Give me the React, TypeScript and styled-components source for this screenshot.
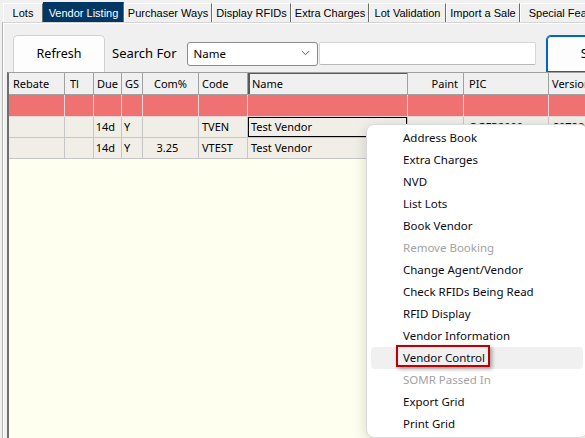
import React from "react";
import styled, { createGlobalStyle, css } from "styled-components";

const GlobalStyle = createGlobalStyle`
  html, body { margin: 0; padding: 0; background: #f0f0f0; }
  body { font-family: "Noto Sans", "Liberation Sans", sans-serif; }
`;

const Page = styled.div`
  position: relative;
  width: 585px;
  height: 438px;
  overflow: hidden;
  background: #f0f0f0;
  display: flex;
  flex-direction: column;
`;

const TabStrip = styled.div`
  display: flex;
  align-items: flex-end;
  height: 22px;
  padding-left: 3px;
  box-sizing: border-box;
`;

const Tab = styled.div<{ $w: number; $active?: boolean }>`
  flex: none;
  width: ${(p) => p.$w}px;
  height: ${(p) => (p.$active ? 20 : 19)}px;
  box-sizing: border-box;
  display: flex;
  align-items: center;
  justify-content: center;
  white-space: nowrap;
  overflow: hidden;
  font-family: "Liberation Sans", Arial, sans-serif;
  font-size: 11px;
  color: ${(p) => (p.$active ? "#ffffff" : "#000000")};
  background: ${(p) => (p.$active ? "#003764" : "#f0f0f0")};
  border-top: 1px solid ${(p) => (p.$active ? "#003764" : "#ffffff")};
  border-left: 1px solid ${(p) => (p.$active ? "#003764" : "#ffffff")};
  border-right: 1px solid #6b6b6b;
`;

const Panel = styled.div`
  flex: 1;
  min-height: 0;
  margin-left: 2px;
  border-top: 1px solid #d4d4d4;
  border-left: 1px solid #b4b4b4;
  box-shadow: inset 1px 1px 0 #ffffff;
  display: flex;
  flex-direction: column;
`;

const Toolbar = styled.div`
  display: flex;
  align-items: center;
  height: 49px;
  padding: 12px 0 0 10px;
  box-sizing: border-box;
  flex: none;
`;

const PushButton = styled.div<{ $focused?: boolean; $w: number }>`
  flex: none;
  width: ${(p) => p.$w}px;
  height: 37px;
  box-sizing: border-box;
  align-self: flex-end;
  display: flex;
  align-items: center;
  justify-content: center;
  background: #fdfdfd;
  border: 1px solid ${(p) => (p.$focused ? "#0067c0" : "#d0d0d0")};
  border-bottom: none;
  border-radius: 5px 5px 0 0;
  font-size: 12.5px;
  color: #000;
  padding-bottom: 2px;
  ${(p) =>
    p.$focused &&
    css`
      box-shadow: inset 0 0 0 1px #0067c0;
    `}
`;

const Label = styled.span`
  margin-left: 7px;
  font-size: 13px;
  color: #000;
  white-space: nowrap;
  padding-bottom: 1px;
`;

const Select = styled.div`
  flex: none;
  margin-left: 10px;
  width: 131px;
  height: 24px;
  box-sizing: border-box;
  background: #fff;
  border: 1px solid #8a8a8a;
  border-radius: 3px;
  display: flex;
  align-items: center;
  justify-content: space-between;
  padding: 0 7px 1px 6px;
  font-size: 11.5px;
  color: #000;
`;

const TextInput = styled.div`
  flex: none;
  margin-left: 1px;
  width: 217px;
  height: 23px;
  box-sizing: border-box;
  background: #fff;
  border: 1px solid #d6d6d6;
  border-bottom-color: #b8b8b8;
  border-radius: 2px;
`;

const Gap = styled.div<{ $w: number }>`
  flex: none;
  width: ${(p) => p.$w}px;
`;

const Grid = styled.div`
  flex: 1;
  min-height: 0;
  margin-left: 4px;
  border-left: 2px solid #6e6e6e;
  border-top: 1px solid #a0a0a0;
  background: #fffff0;
  display: flex;
  flex-direction: column;
  font-size: 11px;
  color: #000;
`;

const COLS = "56px 29px 28px 21px 56px 49px 160px 56px 85px 80px";

type RowKind = "header" | "new" | "data";

const Row = styled.div<{ $kind: RowKind }>`
  display: grid;
  grid-template-columns: ${COLS};
  height: ${(p) => (p.$kind === "data" ? 21 : 22)}px;
  flex: none;
  background: ${(p) =>
    p.$kind === "header" ? "#f0f0f0" : p.$kind === "new" ? "#f07171" : "#f1eee7"};
`;

const Cell = styled.div<{
  $kind: RowKind;
  $align: "left" | "right" | "center";
  $pl: number;
  $pr: number;
  $sorted?: boolean;
  $focused?: boolean;
}>`
  box-sizing: border-box;
  height: 100%;
  display: flex;
  align-items: center;
  justify-content: ${(p) =>
    p.$align === "left" ? "flex-start" : p.$align === "right" ? "flex-end" : "center"};
  padding: 0 ${(p) => p.$pr}px 1px ${(p) => p.$pl}px;
  white-space: nowrap;
  overflow: hidden;
  border-right: 1px solid
    ${(p) => (p.$kind === "header" ? "#a0a0a0" : p.$kind === "new" ? "#ead6d6" : "#c6c6c6")};
  border-bottom: 1px solid
    ${(p) => (p.$kind === "header" ? "#a0a0a0" : p.$kind === "new" ? "#ead6d6" : "#c6c6c6")};
  ${(p) =>
    p.$sorted &&
    css`
      box-shadow: inset 2px 1px 0 #5a5a5a;
    `}
  ${(p) =>
    p.$focused &&
    css`
      box-shadow: inset 0 0 0 1px #000;
    `}
`;

const Menu = styled.div`
  position: absolute;
  left: 366px;
  top: 124px;
  width: 222px;
  box-sizing: border-box;
  padding: 2px 0;
  background: #ffffff;
  border: 1px solid #dadada;
  border-radius: 8px;
  box-shadow: 0 4px 14px rgba(0, 0, 0, 0.16);
  font-size: 11.5px;
`;

const MenuItem = styled.div<{ $disabled?: boolean; $hover?: boolean }>`
  position: relative;
  height: 22px;
  margin: 0 4px;
  padding: 0 0 1px 32px;
  box-sizing: border-box;
  display: flex;
  align-items: center;
  border-radius: 4px;
  white-space: nowrap;
  color: ${(p) => (p.$disabled ? "#a3a3a3" : "#0a0a14")};
  background: ${(p) => (p.$hover ? "#f0f0f0" : "transparent")};
`;

const Highlight = styled.span`
  position: absolute;
  left: 25px;
  top: -2px;
  width: 94px;
  height: 22px;
  box-sizing: border-box;
  border: 2.5px solid #c00000;
  box-shadow: 2px 2px 4px rgba(0, 0, 0, 0.35);
  pointer-events: none;
`;

const tabs = [
  { label: "Lots", w: 40 },
  { label: "Vendor Listing", w: 81, active: true },
  { label: "Purchaser Ways", w: 88 },
  { label: "Display RFIDs", w: 79 },
  { label: "Extra Charges", w: 78 },
  { label: "Lot Validation", w: 77 },
  { label: "Import a Sale", w: 74 },
  { label: "Special Features", w: 100 },
];

type Col = {
  key: string;
  title: string;
  hAlign: "left" | "right" | "center";
  hl: number;
  hr: number;
  align: "left" | "right" | "center";
  pl: number;
  pr: number;
};

const columns: Col[] = [
  { key: "rebate", title: "Rebate", hAlign: "left", hl: 4, hr: 2, align: "left", pl: 4, pr: 2 },
  { key: "tl", title: "Tl", hAlign: "left", hl: 5, hr: 0, align: "left", pl: 4, pr: 2 },
  { key: "due", title: "Due", hAlign: "left", hl: 3, hr: 0, align: "right", pl: 2, pr: 6 },
  { key: "gs", title: "GS", hAlign: "left", hl: 3, hr: 0, align: "left", pl: 2, pr: 0 },
  { key: "com", title: "Com%", hAlign: "center", hl: 0, hr: 0, align: "center", pl: 0, pr: 6 },
  { key: "code", title: "Code", hAlign: "left", hl: 3, hr: 0, align: "left", pl: 3, pr: 0 },
  { key: "name", title: "Name", hAlign: "left", hl: 4, hr: 0, align: "left", pl: 3, pr: 0 },
  { key: "paint", title: "Paint", hAlign: "right", hl: 0, hr: 5, align: "right", pl: 0, pr: 5 },
  { key: "pic", title: "PIC", hAlign: "left", hl: 5, hr: 0, align: "left", pl: 5, pr: 0 },
  { key: "version", title: "Version", hAlign: "left", hl: 3, hr: 0, align: "left", pl: 4, pr: 0 },
];

const rows: Record<string, string>[] = [
  { due: "14d", gs: "Y", code: "TVEN", name: "Test Vendor", pic: "QGFP2000", version: "S0720001" },
  { due: "14d", gs: "Y", com: "3.25", code: "VTEST", name: "Test Vendor", pic: "QGFP2001", version: "S0720002" },
];

const menuItems: { label: string; disabled?: boolean; hover?: boolean }[] = [
  { label: "Address Book" },
  { label: "Extra Charges" },
  { label: "NVD" },
  { label: "List Lots" },
  { label: "Book Vendor" },
  { label: "Remove Booking", disabled: true },
  { label: "Change Agent/Vendor" },
  { label: "Check RFIDs Being Read" },
  { label: "RFID Display" },
  { label: "Vendor Information" },
  { label: "Vendor Control", hover: true },
  { label: "SOMR Passed In", disabled: true },
  { label: "Export Grid" },
  { label: "Print Grid" },
];

const Chevron = () => (
  <svg width="9" height="6" viewBox="0 0 9 6" fill="none">
    <path d="M0.8 1 L4.5 4.7 L8.2 1" stroke="#5f5f5f" strokeWidth="1" />
  </svg>
);

export default function App() {
  return (
    <>
      <GlobalStyle />
      <Page>
        <TabStrip>
          {tabs.map((t) => (
            <Tab key={t.label} $w={t.w} $active={t.active}>
              {t.label}
            </Tab>
          ))}
        </TabStrip>
        <Panel>
          <Toolbar>
            <PushButton $w={92}>Refresh</PushButton>
            <Label>Search For</Label>
            <Select>
              <span>Name</span>
              <Chevron />
            </Select>
            <TextInput />
            <Gap $w={10} />
            <PushButton $w={110} $focused>
              Search
            </PushButton>
          </Toolbar>
          <Grid>
            <Row $kind="header">
              {columns.map((c) => (
                <Cell
                  key={c.key}
                  $kind="header"
                  $align={c.hAlign}
                  $pl={c.hl}
                  $pr={c.hr}
                  $sorted={c.key === "name"}
                >
                  {c.title}
                </Cell>
              ))}
            </Row>
            <Row $kind="new">
              {columns.map((c) => (
                <Cell key={c.key} $kind="new" $align={c.align} $pl={c.pl} $pr={c.pr} />
              ))}
            </Row>
            {rows.map((r, i) => (
              <Row $kind="data" key={i}>
                {columns.map((c) => (
                  <Cell
                    key={c.key}
                    $kind="data"
                    $align={c.align}
                    $pl={c.pl}
                    $pr={c.pr}
                    $focused={i === 0 && c.key === "name"}
                  >
                    {r[c.key] ?? ""}
                  </Cell>
                ))}
              </Row>
            ))}
          </Grid>
        </Panel>
        <Menu>
          {menuItems.map((m) => (
            <MenuItem key={m.label} $disabled={m.disabled} $hover={m.hover}>
              {m.label}
              {m.hover && <Highlight />}
            </MenuItem>
          ))}
        </Menu>
      </Page>
    </>
  );
}
